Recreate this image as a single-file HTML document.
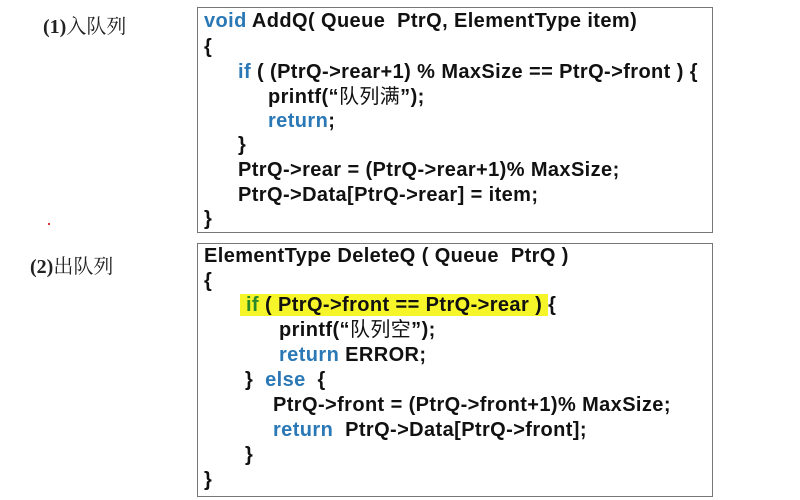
<!DOCTYPE html>
<html><head><meta charset="utf-8"><style>
html,body{margin:0;padding:0;background:#fff;width:800px;height:500px;overflow:hidden;position:relative}
.box{position:absolute;border:1.5px solid #777;box-sizing:border-box;background:#fff}
.l{position:absolute;font-family:"Liberation Sans","Noto Sans CJK SC",sans-serif;font-weight:bold;font-size:20px;letter-spacing:0.4px;color:#111;white-space:pre;line-height:24px}
.c{font-weight:normal}
.k{color:#2a78b6}
.lab{position:absolute;font-family:"Liberation Serif","Noto Serif CJK SC",serif;font-size:20px;color:#222;white-space:pre}
.lab b{font-weight:bold}
.hl{background:#f5f52a}
</style></head><body>
<div class="lab" style="left:43px;top:10px"><b>(1)</b>入队列</div>
<div class="lab" style="left:30px;top:250px"><b>(2)</b>出队列</div>
<div style="position:absolute;left:48px;top:223px;width:2px;height:2px;background:#d33"></div>

<div class="box" style="left:197px;top:7px;width:516px;height:226px"></div>
<div class="l" style="left:204px;top:9px"><span class="k">void</span> AddQ( Queue  PtrQ, ElementType item)</div>
<div class="l" style="left:204px;top:35px">{</div>
<div class="l" style="left:238px;top:60px"><span class="k">if</span> ( (PtrQ-&gt;rear+1) % MaxSize == PtrQ-&gt;front ) {</div>
<div class="l" style="left:268px;top:85px">printf(“<span class="c">队列满</span>”);</div>
<div class="l" style="left:268px;top:109px"><span class="k">return</span>;</div>
<div class="l" style="left:238px;top:133px">}</div>
<div class="l" style="left:238px;top:158px">PtrQ-&gt;rear = (PtrQ-&gt;rear+1)% MaxSize;</div>
<div class="l" style="left:238px;top:183px">PtrQ-&gt;Data[PtrQ-&gt;rear] = item;</div>
<div class="l" style="left:204px;top:207px">}</div>

<div class="box" style="left:197px;top:243px;width:516px;height:254px"></div>
<div class="l" style="left:204px;top:244px">ElementType DeleteQ ( Queue  PtrQ )</div>
<div class="l" style="left:204px;top:269px">{</div>
<div class="l" style="left:240px;top:293px"><span class="hl"><span style="color:#2a8a2a"> if</span> ( PtrQ-&gt;front == PtrQ-&gt;rear ) </span>{</div>
<div class="l" style="left:279px;top:318px">printf(“<span class="c">队列空</span>”);</div>
<div class="l" style="left:279px;top:343px"><span class="k">return</span> ERROR;</div>
<div class="l" style="left:245px;top:368px">}  <span class="k">else</span>  {</div>
<div class="l" style="left:273px;top:393px">PtrQ-&gt;front = (PtrQ-&gt;front+1)% MaxSize;</div>
<div class="l" style="left:273px;top:418px"><span class="k">return</span>  PtrQ-&gt;Data[PtrQ-&gt;front];</div>
<div class="l" style="left:245px;top:443px">}</div>
<div class="l" style="left:204px;top:468px">}</div>
</body></html>
